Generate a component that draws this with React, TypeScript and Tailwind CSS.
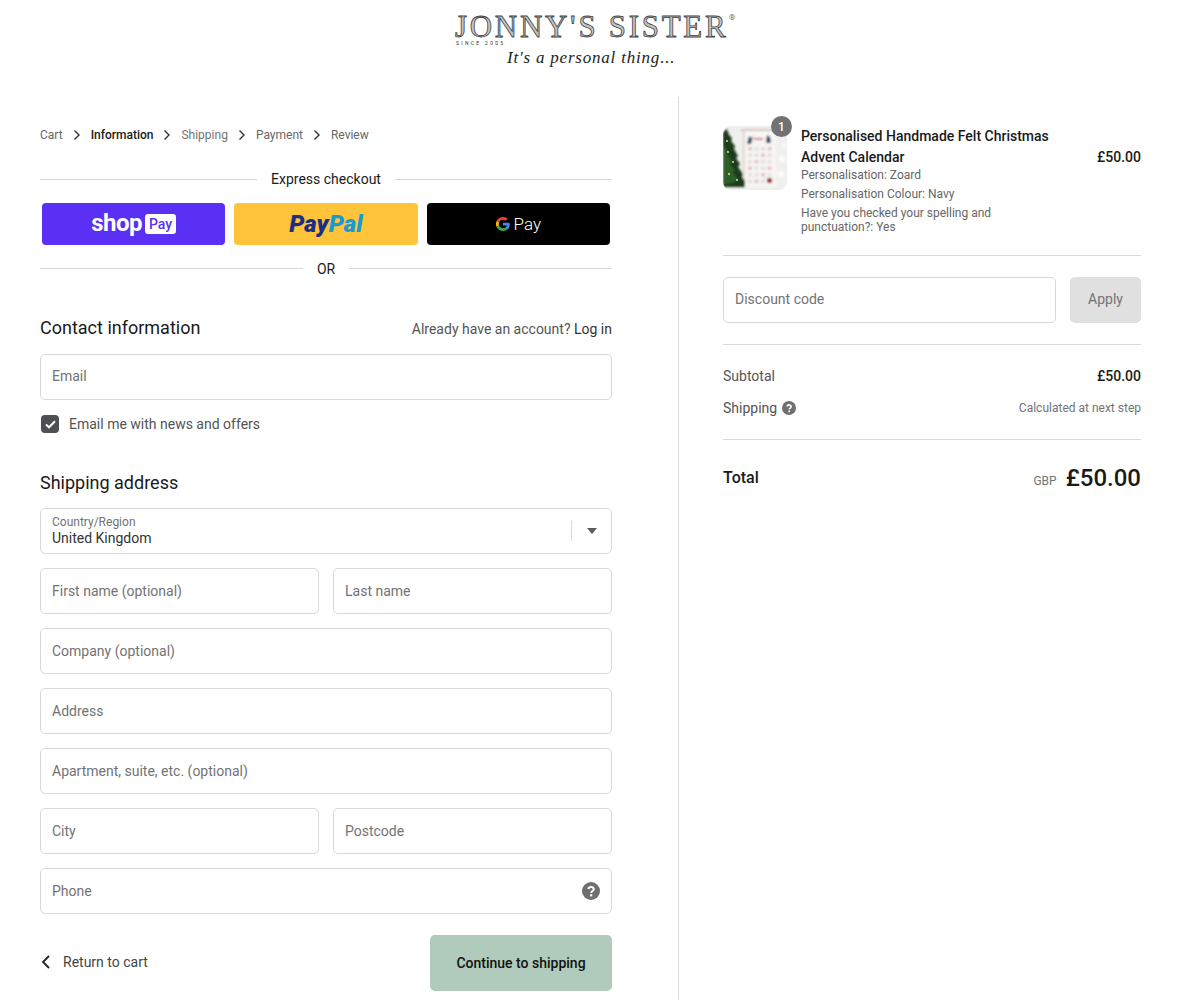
import React from "react";

const Chevron = () => (
  <svg width="8" height="12" viewBox="0 0 8 12" fill="none" stroke="#333" strokeWidth="1.4" className="mx-[10px] shrink-0">
    <path d="M1.5 1.5 6 6l-4.5 4.5" />
  </svg>
);

const Help = ({ size }: { size: number }) => (
  <svg width={size} height={size} viewBox="0 0 18 18" className="shrink-0">
    <circle cx="9" cy="9" r="9" fill="#6f6f6f" />
    <path d="M6.3 7a2.8 2.6 0 0 1 5.500.2c0 1.700-2.400 1.900-2.600 3.600" fill="none" stroke="#fff" strokeWidth="2.100" />
    <rect x="8.100" y="12.200" width="2.200" height="2.200" fill="#fff" />
  </svg>
);

const Field = ({ label, className = "", children }: { label: string; className?: string; children?: React.ReactNode }) => (
  <div className={`h-[46px] flex items-center px-[11px] rounded-[5px] border border-[#d9d9d9] bg-white text-[14px] text-[#737373] ${className}`}>
    {label}
    {children}
  </div>
);

const Divider = ({ children, gap }: { children: React.ReactNode; gap: string }) => (
  <div className="flex items-center h-[18px]">
    <div className="flex-1 h-px bg-[#d9d9d9]" />
    <div className={`text-[14px] text-[#1a1a1a] ${gap}`}>{children}</div>
    <div className="flex-1 h-px bg-[#d9d9d9]" />
  </div>
);

const Thumb = () => (
  <svg width="64" height="64" viewBox="0 0 64 64" className="rounded-[8px] block">
    <defs>
      <filter id="soft" x="-10%" y="-10%" width="120%" height="120%">
        <feGaussianBlur stdDeviation="0.8" />
      </filter>
      <filter id="softer" x="-100%" y="-100%" width="300%" height="300%">
        <feGaussianBlur stdDeviation="1.5" />
      </filter>
    </defs>
    <rect width="64" height="64" fill="#efefed" />
    <g filter="url(#soft)">
      <rect x="20" y="5" width="33" height="56" fill="#f8f6f4" />
      <rect x="18" y="3.500" width="37" height="1.500" fill="#cbbcaa" />
      <rect x="20" y="5" width="1.500" height="56" fill="#dccdbc" />
      <path d="M24 18l2-8 2 2 2-2-2 8zM43 17l1-8 3 2 1 6z" fill="#2d3a5c" />
      <rect x="31" y="12" width="9" height="2" fill="#d9718a" />
      {[0, 1, 2, 3, 4, 5].map((r) =>
        [0, 1, 2, 3].map((c) => (
          <rect key={`${r}-${c}`} x={25 + c * 6.500} y={21 + r * 6.500} width="4" height="3.500" fill={(r + c) % 3 === 0 ? "#e6bfc6" : "#e2dedc"} />
        ))
      )}
      <rect x="44" y="52" width="5" height="5" fill="#a1243c" />
      <path d="M0 6l4-3 2 6 3 3-1 3 4 5-1 3 4 7-2 2 4 6-2 3 5 7-1 3 3 4v6H0z" fill="#1c3a1c" />
      <path d="M0 20l5 5-1 3 5 7-2 3 5 6-2 3 5 6-3 3-12 3z" fill="#2f5f2a" />
    </g>
    <circle cx="4" cy="15" r="1" fill="#e9d89a" />
    <circle cx="5" cy="26" r="1" fill="#f3dd97" />
    <circle cx="10" cy="36" r="1" fill="#f3dd97" />
    <circle cx="6" cy="48" r="1" fill="#f3dd97" />
    <circle cx="14" cy="54" r="1" fill="#f3dd97" />
    <g filter="url(#softer)" fill="#fff">
      <circle cx="59" cy="33" r="3" />
      <circle cx="58" cy="48" r="3" />
      <circle cx="61" cy="20" r="2" />
    </g>
  </svg>
);

export default function App() {
  return (
    <div className="w-[1180px] h-[1000px] overflow-hidden bg-white font-['Roboto',sans-serif] text-[#1a1a1a]">
      <header className="h-[97px] flex flex-col items-center pt-[15px]">
        <div className="relative w-[280px] h-[54px] ml-[10px]">
          <div className="font-['Liberation_Serif',serif] text-[31px] leading-[24px] tracking-[2.700px] whitespace-nowrap text-[#c4c4c4] [-webkit-text-stroke:0.8px_#444]">
            JONNY'S SISTER
          </div>
          <div className="absolute left-[274px] top-[-1px] text-[8px] leading-none text-[#666]">®</div>
          <div className="absolute left-[1px] top-[25px] text-[5px] leading-[6px] tracking-[2.300px] text-[#333] whitespace-nowrap">SINCE 2005</div>
          <div className="absolute left-[52px] top-[32px] font-['Liberation_Serif',serif] italic text-[17px] leading-[22px] tracking-[0.800px] text-[#222] whitespace-nowrap">
            It's a personal thing...
          </div>
        </div>
      </header>
      <div className="flex h-[903px]">
        <main className="w-[679px] shrink-0 pl-[40px] pr-[66px] pt-[30px] border-r border-[#d9d9d9]">
          <nav className="flex items-center h-[16px] text-[12px] text-[#666]">
            <span>Cart</span>
            <Chevron />
            <span className="font-medium text-[#1a1a1a]">Information</span>
            <Chevron />
            <span className="text-[#737373]">Shipping</span>
            <Chevron />
            <span>Payment</span>
            <Chevron />
            <span>Review</span>
          </nav>
          <div className="mt-[27px]">
            <Divider gap="px-[14px]">Express checkout</Divider>
          </div>
          <div className="mt-[15px] px-[2px] grid grid-cols-3 gap-[9px] h-[42px]">
            <div className="rounded-[4px] bg-[#5a31f4] flex items-center justify-center gap-[3px] text-white">
              <span className="text-[24px] font-bold leading-none tracking-[-0.500px] mb-[2px]">shop</span>
              <span className="bg-white text-[#5a31f4] rounded-[3px] text-[14px] font-medium leading-[20px] px-[4px]">Pay</span>
            </div>
            <div className="rounded-[4px] bg-[#ffc439] flex items-center justify-center text-[24px] font-black italic tracking-[0.100px]">
              <span className="text-[#1b2f86]">Pay</span>
              <span className="text-[#179bd7]">Pal</span>
            </div>
            <div className="rounded-[4px] bg-black flex items-center justify-center gap-[4px] text-white">
              <svg width="14" height="14" viewBox="0 0 48 48">
                <path fill="#EA4335" d="M24 9.500c3.500 0 6.700 1.200 9.200 3.600l6.900-6.900C35.900 2.400 30.500 0 24 0 14.600 0 6.500 5.400 2.600 13.200l8 6.200C12.500 13.700 17.800 9.500 24 9.500z" />
                <path fill="#4285F4" d="M47 24.500c0-1.600-.1-3.100-.4-4.500H24v9h12.900c-.6 3-2.200 5.500-4.700 7.200l7.700 6C44.400 38 47 31.900 47 24.500z" />
                <path fill="#FBBC05" d="M10.500 28.600c-.5-1.400-.8-3-.8-4.600s.3-3.200.8-4.600l-8-6.200C.9 16.500 0 20.100 0 24s.9 7.500 2.600 10.800l7.900-6.200z" />
                <path fill="#34A853" d="M24 48c6.500 0 11.900-2.100 15.900-5.800l-7.700-6c-2.200 1.400-4.900 2.300-8.200 2.300-6.200 0-11.500-4.200-13.400-9.900l-8 6.200C6.500 42.600 14.600 48 24 48z" />
              </svg>
              <span className="text-[17px] leading-none font-light">Pay</span>
            </div>
          </div>
          <div className="mt-[14px]">
            <Divider gap="px-[14px] pt-[2px]">OR</Divider>
          </div>
          <div className="mt-[39px] flex items-center justify-between h-[24px]">
            <h2 className="text-[18px] text-[#1a1a1a] mb-[2px]">Contact information</h2>
            <div className="text-[14px] text-[#545454] mt-[2px]">
              Already have an account? <span className="text-[#333]">Log in</span>
            </div>
          </div>
          <Field label="Email" className="mt-[14px] pb-[2px]" />
          <div className="mt-[15px] flex items-center h-[18px] text-[14px] text-[#545454]">
            <div className="w-[18px] h-[18px] rounded-[4px] bg-[#4d4f53] flex items-center justify-center ml-[1px] mr-[10px]">
              <svg width="11" height="9" viewBox="0 0 11 9" fill="none" stroke="#fff" strokeWidth="2">
                <path d="M1 4.500 4 7.300 10 1.300" />
              </svg>
            </div>
            Email me with news and offers
          </div>
          <h2 className="mt-[37px] h-[24px] flex items-center text-[18px] text-[#1a1a1a]">Shipping address</h2>
          <div className="mt-[14px] h-[46px] rounded-[5px] border border-[#d9d9d9] flex items-center pl-[11px] pr-[14px]">
            <div className="flex-1">
              <div className="text-[12px] leading-[14px] text-[#737373]">Country/Region</div>
              <div className="text-[14px] leading-[17px] text-[#333] mt-[1px]">United Kingdom</div>
            </div>
            <div className="w-px h-[20px] bg-[#d9d9d9] mr-[15px]" />
            <svg width="10" height="6" viewBox="0 0 10 6">
              <path d="M0 0h10L5 6z" fill="#5c5c5c" />
            </svg>
          </div>
          <div className="mt-[14px] grid grid-cols-2 gap-[14px]">
            <Field label="First name (optional)" />
            <Field label="Last name" />
          </div>
          <Field label="Company (optional)" className="mt-[14px]" />
          <Field label="Address" className="mt-[14px]" />
          <Field label="Apartment, suite, etc. (optional)" className="mt-[14px]" />
          <div className="mt-[14px] grid grid-cols-2 gap-[14px]">
            <Field label="City" />
            <Field label="Postcode" />
          </div>
          <Field label="Phone" className="mt-[14px] justify-between">
            <Help size={18} />
          </Field>
          <div className="mt-[21px] flex items-center justify-between">
            <div className="flex items-center text-[14px] text-[#444] mb-[2px]">
              <svg width="12" height="16" viewBox="0 0 12 16" fill="none" stroke="#222" strokeWidth="1.800" className="mr-[11px]">
                <path d="M9 2 3 8l6 6" />
              </svg>
              Return to cart
            </div>
            <div className="w-[182px] h-[56px] rounded-[5px] bg-[#b0cbbb] flex items-center justify-center text-[14px] font-medium text-[#111]">
              Continue to shipping
            </div>
          </div>
        </main>
        <aside className="flex-1 pl-[44px] pr-[39px] pt-[29px]">
          <div className="flex pb-[21px] border-b border-[#d9d9d9]">
            <div className="relative w-[64px] h-[64px] mr-[14px] shrink-0">
              <Thumb />
              <div className="absolute right-[-5px] top-[-10px] w-[21px] h-[21px] rounded-full bg-[#727272] text-white text-[12px] font-medium flex items-center justify-center">1</div>
            </div>
            <div className="flex-1 flex items-start">
              <div className="flex-1">
                <div className="text-[14px] leading-[21px] font-medium text-[#1a1a1a] w-[260px]">Personalised Handmade Felt Christmas Advent Calendar</div>
                <div className="text-[12px] leading-[14px] text-[#666]">Personalisation: Zoard</div>
                <div className="text-[12px] leading-[14px] text-[#666] mt-[5px]">Personalisation Colour: Navy</div>
                <div className="text-[12px] leading-[14px] text-[#666] mt-[5px] w-[200px]">Have you checked your spelling and punctuation?: Yes</div>
              </div>
              <div className="mt-[21px] text-[14px] leading-[21px] font-medium">£50.00</div>
            </div>
          </div>
          <div className="flex gap-[14px] py-[21px] border-b border-[#d9d9d9]">
            <Field label="Discount code" className="flex-1 pb-[2px]" />
            <div className="w-[71px] h-[46px] rounded-[5px] bg-[#e0e0e0] text-[14px] text-[#737373] flex items-center justify-center pb-[2px]">Apply</div>
          </div>
          <div className="pt-[21px] pb-[21px] border-b border-[#d9d9d9]">
            <div className="flex items-center justify-between h-[20px]">
              <span className="text-[14px] text-[#545454]">Subtotal</span>
              <span className="text-[14px] font-medium">£50.00</span>
            </div>
            <div className="flex items-center justify-between h-[20px] mt-[12px]">
              <span className="flex items-center gap-[5px] text-[14px] text-[#545454]">Shipping <Help size={14} /></span>
              <span className="text-[12px] text-[#737373]">Calculated at next step</span>
            </div>
          </div>
          <div className="flex items-center justify-between mt-[21px] h-[34px]">
            <span className="text-[16px] font-medium">Total</span>
            <span className="flex items-center">
              <span className="text-[12px] text-[#737373] mr-[9px] mt-[5px]">GBP</span>
              <span className="text-[24px] font-medium">£50.00</span>
            </span>
          </div>
        </aside>
      </div>
    </div>
  );
}
